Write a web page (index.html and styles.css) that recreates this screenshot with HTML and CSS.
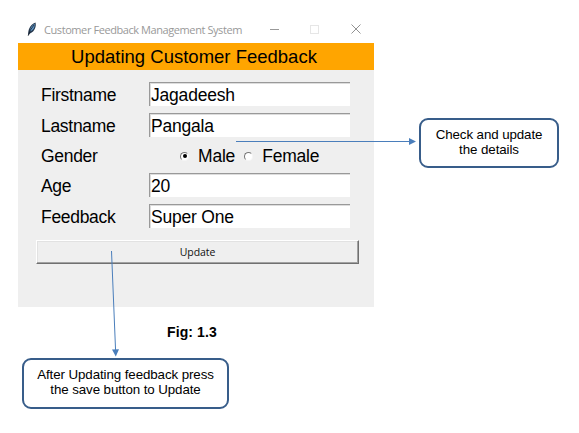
FILE: index.html
```html
<!DOCTYPE html>
<html lang="en">
<head>
<meta charset="utf-8">
<title>Customer Feedback Management System</title>
<link rel="stylesheet" href="styles.css">
</head>
<body>
<main class="figure">
  <section class="window">
    <header class="titlebar">
      <svg class="feather" viewBox="0 0 10 14" aria-hidden="true">
        <path d="M1.2 13.5C.8 8.5 2.6 2.6 8.5.5C9.5 4 8 9.5 3 11.5Z" fill="#26384d"/>
        <path d="M2.9 9.5C3 6.2 4.6 3.4 7.6 1.8C8 5.5 6.2 8.5 2.9 9.5Z" fill="#5f98cb"/>
        <path d="M1.2 13.7Q2.8 7.5 7 3" fill="none" stroke="#17212c" stroke-width=".8"/>
      </svg>
      <span class="title">Customer Feedback Management System</span>
      <svg class="controls" viewBox="0 0 92 10" aria-hidden="true">
        <path d="M0 5.5H9" stroke="#999"/>
        <rect x="40.5" y="1.5" width="8" height="8" fill="none" stroke="#e6e6e6"/>
        <path d="M81.5 .5l9 9M90.5 .5l-9 9" stroke="#929292" fill="none"/>
      </svg>
    </header>
    <h1 class="banner"><span>Updating Customer Feedback</span></h1>
    <form class="form">
      <div class="row"><span class="label">Firstname</span><span class="entry">Jagadeesh</span></div>
      <div class="row"><span class="label">Lastname</span><span class="entry">Pangala</span></div>
      <div class="row"><span class="label">Gender</span>
        <div class="options">
          <span class="radio checked"></span><span class="male">Male</span>
          <span class="radio"></span><span class="female">Female</span>
        </div>
      </div>
      <div class="row"><span class="label">Age</span><span class="entry">20</span></div>
      <div class="row"><span class="label">Feedback</span><span class="entry">Super One</span></div>
      <button class="update" type="button">Update</button>
    </form>
  </section>
  <p class="caption">Fig: 1.3</p>
  <svg class="arrows" viewBox="0 0 579 433" aria-hidden="true">
    <path d="M236 141.5H411M111.5 251L115.6 351" fill="none" stroke="#4a7ebb"/>
    <path d="M409 138L416 141.5L409 145ZM112 349.5L119 349.2L115.8 356.5Z" fill="#4a7ebb"/>
  </svg>
  <div class="callout check"><span>Check and update</span><span>the details</span></div>
  <div class="callout save"><span>After Updating feedback press</span><span>the save button to Update</span></div>
</main>
</body>
</html>
```
FILE: styles.css
```css
* { box-sizing: border-box; }
body { margin: 0; background: #fff; color: #000; font-family: "Liberation Sans", sans-serif; }
.figure { position: relative; width: 579px; height: 433px; padding: 18px; overflow: hidden; }
.window { width: 356px; height: 289px; background: #efefef; }
.titlebar { display: flex; align-items: center; height: 25px; background: #fff; padding: 0 12px 3px 9px; }
.feather { width: 10px; height: 14px; }
.title { margin-left: 7px; font: 11px/16px "Open Sans", sans-serif; color: #999; white-space: nowrap; letter-spacing: -0.42px; padding-top: 1px; }
.controls { width: 92px; height: 10px; margin-left: auto; }
.banner { margin: 0; height: 27px; background: #ffa500; font-size: 18.5px; line-height: 28px; font-weight: 400; text-align: center; padding-right: 4px; white-space: nowrap; }
.form { margin: 0; padding: 9px 15px 0 18px; }
.row { display: flex; align-items: center; height: 30.4px; padding-left: 5px; font-size: 17.5px; letter-spacing: -0.2px; }
.label { width: 108px; padding-top: 3px; letter-spacing: -0.3px; }
.entry { width: 201px; height: 24px; padding-left: 1px; background: #fff; border-top: 1px solid #999; border-left: 1px solid #999; box-shadow: inset 1px 1px #ddd; line-height: 25px; }
.options { display: flex; align-items: center; padding: 3px 0 0 31px; }
.radio { display: flex; align-items: center; justify-content: center; width: 9px; height: 9px; border-radius: 50%; background: #fff; border: 1px solid; border-color: #777 #f5f5f5 #f5f5f5 #777; }
.checked::after { content: ""; width: 4px; height: 4px; border-radius: 50%; background: #000; }
.male { margin: 0 9px 0 9px; }
.female { margin-left: 9px; }
.update { display: block; width: 323px; height: 24px; margin: 9px 0 0; padding: 0; background: #efefef; border: 1px solid; border-color: #fff #707070 #707070 #fff; box-shadow: inset -1px -1px #a2a2a2, inset 1px 1px #e2e2e2; font: 10.5px/20px "Open Sans", sans-serif; letter-spacing: -0.1px; color: #111; text-align: center; }
.caption { margin: 17px 0 0 149px; font-size: 14px; line-height: 16px; font-weight: 700; letter-spacing: 0.1px; }
.arrows { position: absolute; inset: 0; width: 579px; height: 433px; }
.callout { position: absolute; display: flex; flex-direction: column; align-items: center; padding-top: 7px; border: 2px solid #385d8a; border-radius: 9px; background: #fff; font-size: 13.33px; letter-spacing: -0.09px; line-height: 15px; white-space: nowrap; }
.check { left: 419px; top: 118px; width: 140px; height: 50px; }
.save { left: 22px; top: 358px; width: 207px; height: 51px; }
```
